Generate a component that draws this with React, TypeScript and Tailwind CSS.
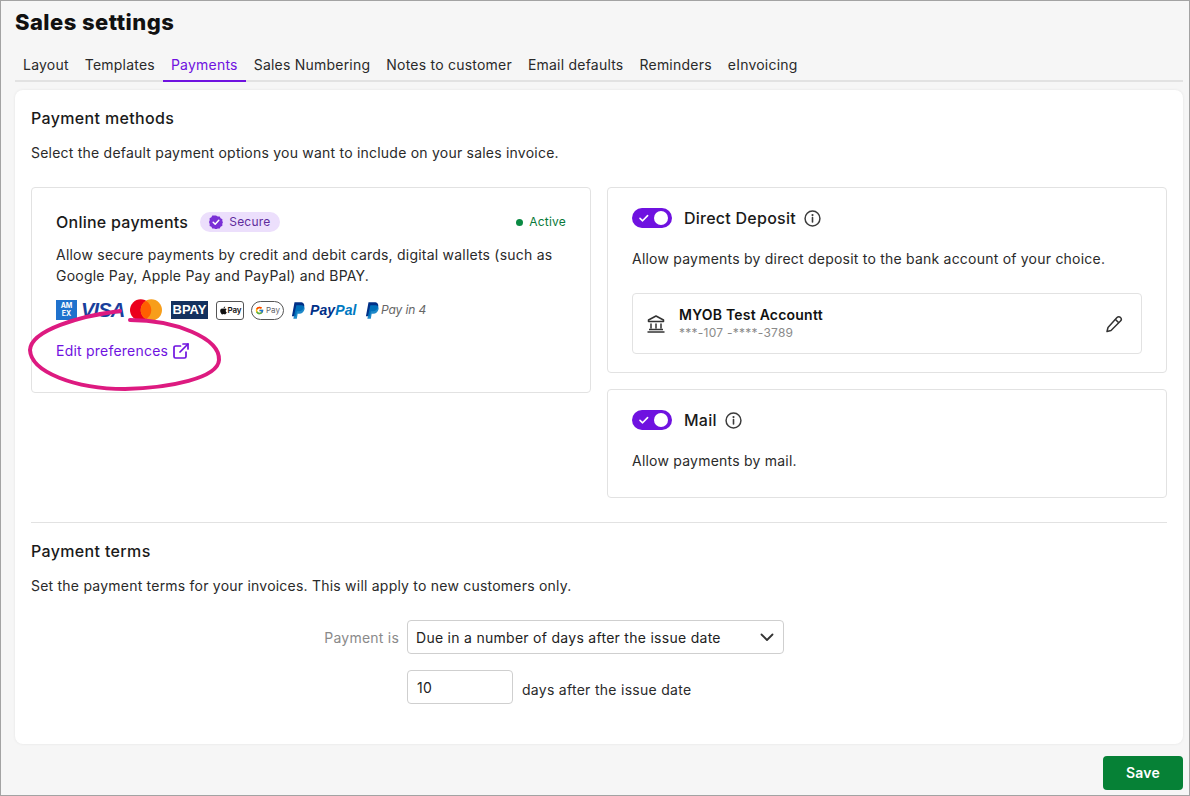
import React from "react";
import { FaApple } from "react-icons/fa";
import { FcGoogle } from "react-icons/fc";

const Toggle = () => (
  <div className="w-10 h-5 rounded-full bg-[#6f12e0] flex items-center justify-between px-[3px] shrink-0">
    <svg width="12" height="12" viewBox="0 0 12 12" fill="none" className="ml-[3px]"><path d="M2 6.400 4.600 8.800 9.600 3.600" stroke="#fff" strokeWidth="1.600" strokeLinecap="round" strokeLinejoin="round" /></svg>
    <div className="w-[14px] h-[14px] rounded-full bg-white mr-[1px]" />
  </div>
);

const Info = () => (
  <svg width="17" height="17" viewBox="0 0 16 16" fill="none" className="shrink-0">
    <circle cx="8" cy="8" r="7" stroke="#3c3c3c" strokeWidth="1.400" />
    <path d="M8 7.200v4" stroke="#3c3c3c" strokeWidth="1.500" strokeLinecap="round" />
    <circle cx="8" cy="4.800" r="1" fill="#3c3c3c" />
  </svg>
);

const PP = () => (
  <svg width="14" height="17" viewBox="0 0 12 14">
    <path d="M3 0h5c2.600 0 3.800 1.600 3.300 3.800C10.800 6.300 9 7.600 6.700 7.600H5L4.200 12H.8z" fill="#003087" />
    <path d="M4.600 2.400h4.800c1.900.3 2.600 1.800 2.200 3.600-.5 2.400-2.200 3.800-4.500 3.800H5.700L5 14H2z" fill="#0079c1" opacity="0.88" />
  </svg>
);

const tabs = ["Layout", "Templates", "Payments", "Sales Numbering", "Notes to customer", "Email defaults", "Reminders", "eInvoicing"];

export default function App() {
  return (
    <div className="relative w-[1190px] h-[796px] overflow-hidden bg-[#f6f6f6] border border-[#a3a3a3] pl-[14px] pr-[6px] text-[#1a1a1a] font-['Inter',sans-serif] text-[14px] tracking-[0.22px]">
      <h1 className="h-[45px] pt-[7px] font-['Inter',sans-serif] font-extrabold text-[22px] leading-[28px] tracking-[0.45px] text-[#111]">Sales settings</h1>
      <div className="flex h-[36px] border-b-2 border-[#e2e2e2]">
        {tabs.map((t) => (
          <div key={t} className={t === "Payments" ? "h-[36px] px-2 pt-[9px] leading-[20px] text-[#6f12e0] border-b-2 border-[#6f12e0]" : "h-[36px] px-2 pt-[9px] leading-[20px] text-[#2a2a2a]"}>{t}</div>
        ))}
      </div>
      <main className="mt-2 h-[654px] rounded-lg bg-white shadow-[0_0_3px_rgba(0,0,0,0.08)] px-4 pt-[17px]">
        <h2 className="text-[16px] leading-[22px] font-medium tracking-[0.35px]">Payment methods</h2>
        <p className="mt-[13px] leading-[22px] text-[#2a2a2a]">Select the default payment options you want to include on your sales invoice.</p>
        <div className="mt-[23px] flex gap-4 items-start">
          <section className="w-[560px] h-[206px] border border-[#e2e2e2] rounded-[4px] px-6 pt-[23px]">
            <div className="flex items-center h-[22px]">
              <span className="text-[16px] font-medium tracking-[0.25px]">Online payments</span>
              <span className="ml-[12px] h-5 w-[80px] rounded-full bg-[#ecdffc] flex items-center pl-[9px] gap-[6px] text-[12px] text-[#5f2c9c]">
                <svg width="14" height="14" viewBox="0 0 14 14"><path d="M7 0.500l1.700 1.100 2-.1.9 1.800 1.800.9-.1 2L14 7l-.7 1.800.1 2-1.800.9-.9 1.800-2-.1L7 14.500l-1.700-1-2 .1-.9-1.800-1.800-.9.1-2L0 7l.7-1.800-.1-2 1.800-.9.9-1.800 2 .1z" fill="#7a2fd6" /><path d="M4.200 7.200 6.200 9.200 9.800 5.300" stroke="#fff" strokeWidth="1.500" fill="none" strokeLinecap="round" strokeLinejoin="round" /></svg>
                Secure
              </span>
              <span className="ml-auto flex items-center gap-[6px] text-[12px] text-[#08793a]"><span className="w-[7px] h-[7px] rounded-full bg-[#0a8a43]" />Active</span>
            </div>
            <p className="mt-[11px] leading-[21px] text-[#2a2a2a] w-[510px]">Allow secure payments by credit and debit cards, digital wallets (such as Google Pay, Apple Pay and PayPal) and BPAY.</p>
            <div className="mt-[13px] h-[22px] flex items-center">
              <div className="w-[21px] h-[20px] bg-[#1f72cd] text-white text-[7px] font-bold leading-[8px] flex flex-col items-center justify-center tracking-normal shrink-0"><span>AM</span><span>EX</span></div>
              <span className="ml-[4px] w-[42px] shrink-0 font-['Liberation_Sans',sans-serif] italic font-bold text-[20px] leading-[20px] text-[#1a3f9c] tracking-[-0.8px]">VISA</span>
              <svg width="32" height="22" viewBox="0 0 33 22" className="ml-[7px] shrink-0"><circle cx="11" cy="11" r="11" fill="#eb001b" /><circle cx="22" cy="11" r="11" fill="#f79e1b" /><path d="M16.500 1.500a11 11 0 0 1 0 19 11 11 0 0 1 0-19z" fill="#ff5f00" /></svg>
              <div className="ml-[9px] w-[37px] h-[18px] shrink-0 bg-[#12305e] text-white text-[13px] font-bold leading-[18px] text-center tracking-normal font-['Liberation_Sans',sans-serif]">BPAY</div>
              <div className="ml-[8px] w-[28px] h-[19px] shrink-0 border border-[#555] rounded-[3px] text-[8px] font-semibold flex items-center justify-center tracking-[-0.1px] text-[#111]"><FaApple size={9} />Pay</div>
              <div className="ml-[7px] w-[33px] h-[19px] shrink-0 border border-[#555] rounded-full text-[8px] flex items-center justify-center gap-[2px] text-[#5f6368] tracking-normal"><FcGoogle size={9} />Pay</div>
              <div className="ml-[7px] shrink-0"><PP /></div>
              <span className="ml-[5px] w-[47px] shrink-0 italic font-bold text-[14px] tracking-[0.1px] font-['Liberation_Sans',sans-serif] text-[#003087]">Pay<span className="text-[#0079c1]">Pal</span></span>
              <div className="ml-[8px] shrink-0"><PP /></div>
              <span className="ml-[2px] shrink-0 italic text-[12px] tracking-[-0.1px] text-[#666]">Pay in 4</span>
            </div>
            <div className="mt-[20px] flex items-center gap-[5px] text-[#6f12e0] leading-[20px]">
              Edit preferences
              <svg width="16" height="16" viewBox="0 0 16 16" fill="none" stroke="#6f12e0" strokeWidth="1.700" strokeLinecap="round" strokeLinejoin="round"><path d="M7.500 3H2.500A1.500 1.500 0 0 0 1 4.500v9A1.500 1.500 0 0 0 2.500 15h9a1.500 1.500 0 0 0 1.500-1.500V9" /><path d="M10 1h5v5" /><path d="M15 1 7 9" /></svg>
            </div>
          </section>
          <div className="w-[560px] flex flex-col gap-4">
            <section className="h-[186px] border border-[#e2e2e2] rounded-[4px] px-6 pt-[20px]">
              <div className="flex items-center h-5">
                <Toggle />
                <span className="ml-[12px] text-[16px] font-medium tracking-[0.25px]">Direct Deposit</span>
                <span className="ml-[8px]"><Info /></span>
              </div>
              <p className="mt-[20px] leading-[22px] text-[#2a2a2a]">Allow payments by direct deposit to the bank account of your choice.</p>
              <div className="mt-[23px] h-[61px] border border-[#e2e2e2] rounded-[4px] flex items-center pl-[13px] pr-[18px]">
                <svg width="20" height="20" viewBox="0 0 20 20" fill="none" stroke="#333" strokeWidth="1.500"><path d="M10 2 2.500 6v1.500h15V6z" strokeLinejoin="round" /><path d="M5 9.500v5M10 9.500v5M15 9.500v5M3 15.500h14M1.500 18h17" /></svg>
                <div className="ml-[13px]">
                  <div className="text-[14px] leading-[17px] font-semibold text-[#111]">MYOB Test Accountt</div>
                  <div className="mt-[2px] text-[12px] leading-[16px] text-[#8a8a8a] tracking-[0.25px]">***-107 -****-3789</div>
                </div>
                <svg className="ml-auto" width="18" height="18" viewBox="0 0 18 18" fill="none" stroke="#333" strokeWidth="1.500" strokeLinejoin="round" strokeLinecap="round"><path d="M12 2.500a1.800 1.800 0 0 1 3.500 3.500L6 15.500l-4 1 1-4z" /><path d="M10.500 4.500l3 3" /></svg>
              </div>
            </section>
            <section className="h-[109px] border border-[#e2e2e2] rounded-[4px] px-6 pt-[20px]">
              <div className="flex items-center h-5">
                <Toggle />
                <span className="ml-[12px] text-[16px] font-medium tracking-[0.25px]">Mail</span>
                <span className="ml-[8px]"><Info /></span>
              </div>
              <p className="mt-[20px] leading-[22px] text-[#2a2a2a]">Allow payments by mail.</p>
            </section>
          </div>
        </div>
        <hr className="mt-6 border-[#e2e2e2]" />
        <h2 className="mt-[17px] text-[16px] leading-[22px] font-medium tracking-[0.35px]">Payment terms</h2>
        <p className="mt-[13px] leading-[22px] text-[#2a2a2a]">Set the payment terms for your invoices. This will apply to new customers only.</p>
        <div className="mt-[23px] flex items-center h-[34px]">
          <span className="w-[368px] text-right text-[#8a8a8a]">Payment is</span>
          <div className="ml-[8px] w-[377px] h-[34px] border border-[#cfcfcf] rounded-[4px] flex items-center pl-[8px] pr-[8px] justify-between">
            <span className="text-[#222] tracking-[0.28px]">Due in a number of days after the issue date</span>
            <svg width="16" height="16" viewBox="0 0 16 16" fill="none" stroke="#333" strokeWidth="1.800" strokeLinecap="round" strokeLinejoin="round"><path d="M2.500 5.500 8 11l5.500-5.500" /></svg>
          </div>
        </div>
        <div className="mt-4 flex items-center h-[34px] pl-[376px]">
          <div className="w-[106px] h-[34px] border border-[#cfcfcf] rounded-[4px] flex items-center pl-[9px] text-[#222]">10</div>
          <span className="ml-[9px] pt-[4px] text-[#2a2a2a] tracking-[0.28px]">days after the issue date</span>
        </div>
      </main>
      <div className="mt-3 flex justify-end">
        <button className="w-[80px] h-[34px] rounded-[4px] bg-[#068136] text-white font-semibold pb-[1px]">Save</button>
      </div>
      <svg className="absolute left-[-1px] top-[-1px] pointer-events-none" width="300" height="420" viewBox="0 0 300 420" fill="none">
        <path d="M130 320C175 320 220 338 219 360C218 378 170 388 125 389C75 389 31 372 30 350C31 330 80 316 120 311" stroke="#dd1a80" strokeWidth="4" strokeLinecap="round" />
      </svg>
    </div>
  );
}
